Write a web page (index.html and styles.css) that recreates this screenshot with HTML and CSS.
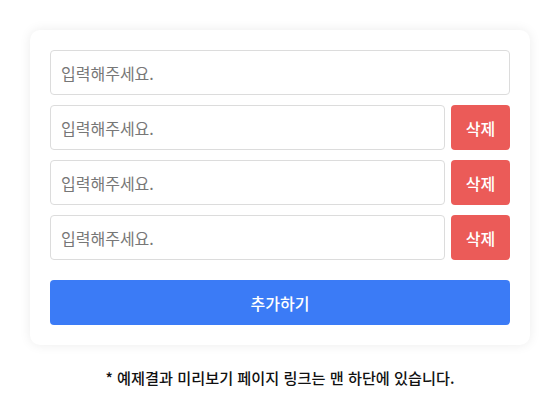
FILE: index.html
```html
<!DOCTYPE html>
<html lang="ko">
<head>
<meta charset="utf-8">
<link rel="stylesheet" href="styles.css">
</head>
<body>
<div class="wrap">
  <div class="card">
    <div class="list">
      <div class="row"><input class="field" placeholder="입력해주세요."></div>
      <div class="row"><input class="field" placeholder="입력해주세요."><button class="del">삭제</button></div>
      <div class="row"><input class="field" placeholder="입력해주세요."><button class="del">삭제</button></div>
      <div class="row"><input class="field" placeholder="입력해주세요."><button class="del">삭제</button></div>
    </div>
    <button class="add">추가하기</button>
  </div>
  <p class="note">* 예제결과 미리보기 페이지 링크는 맨 하단에 있습니다.</p>
</div>
</body>
</html>
```
FILE: styles.css
```css
html, body {
  margin: 0;
  background: #ffffff;
  font-family: "Noto Sans CJK KR", "Noto Sans", sans-serif;
}
.wrap {
  padding: 30px;
}
.card {
  width: 500px;
  box-sizing: border-box;
  padding: 20px;
  background: #fff;
  border-radius: 10px;
  box-shadow: 0 0 12px rgba(0, 0, 0, 0.08);
}
.list {
  display: flex;
  flex-direction: column;
  gap: 10px;
}
.row {
  display: flex;
  gap: 6px;
  height: 45px;
}
.field {
  flex: 1;
  min-width: 0;
  box-sizing: border-box;
  height: 45px;
  border: 1px solid #dcdcdc;
  border-radius: 4px;
  padding: 0 10px;
  font-family: inherit;
  font-size: 16px;
  color: #333;
  outline: none;
}
.field::placeholder {
  color: #777;
}
.del {
  width: 59px;
  height: 45px;
  border: none;
  border-radius: 4px;
  background: #eb5b58;
  color: #fff;
  font-family: inherit;
  font-size: 16px;
  font-weight: 500;
  padding: 0;
}
.add {
  display: block;
  width: 100%;
  height: 45px;
  margin-top: 20px;
  border: none;
  border-radius: 4px;
  background: #3b7bf6;
  color: #fff;
  font-family: inherit;
  font-size: 16px;
  font-weight: 500;
}
.note {
  margin: 21px 0 0;
  width: 500px;
  text-align: center;
  font-size: 15.2px;
  font-weight: 500;
  color: #111;
}
```
